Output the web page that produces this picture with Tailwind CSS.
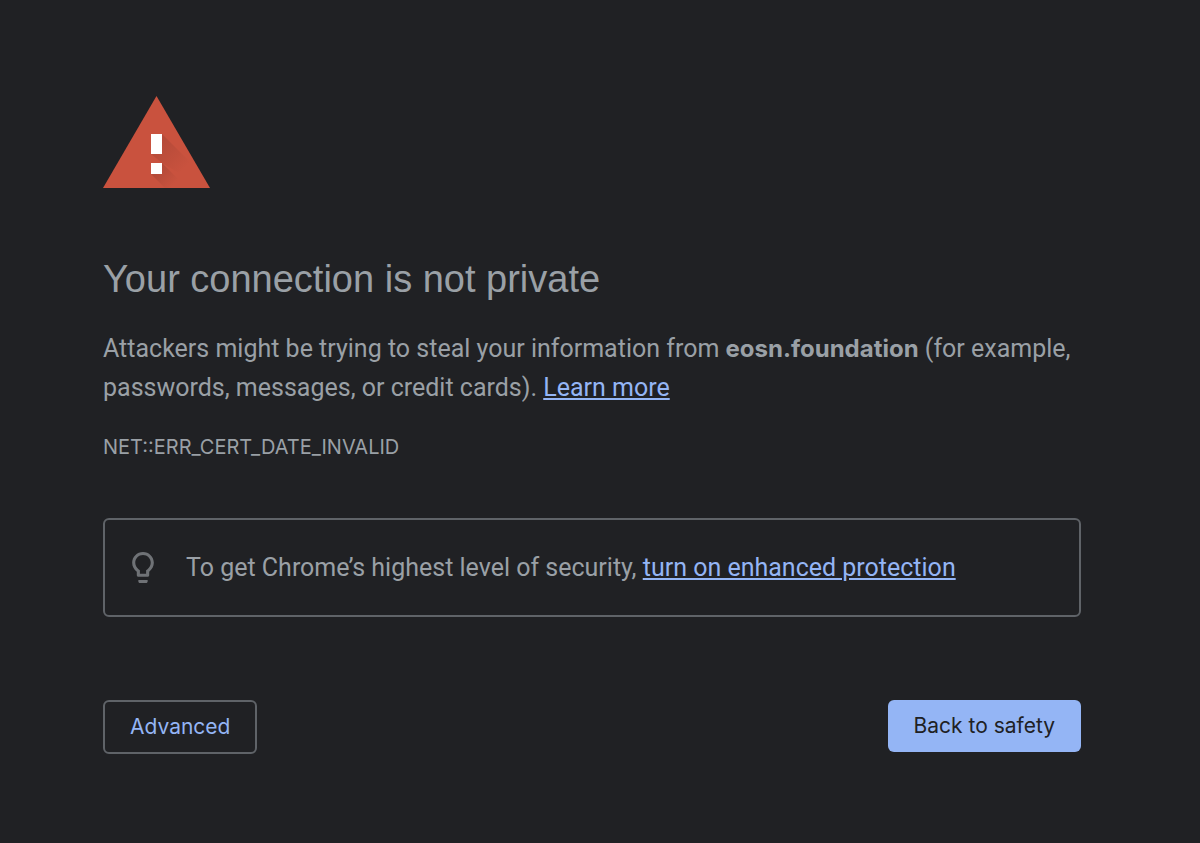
<!DOCTYPE html>
<html lang="en">
  <head>
    <meta charset="UTF-8" />
    <meta name="viewport" content="width=device-width, initial-scale=1.0" />
    <title>Privacy error</title>
    <script src="https://cdn.jsdelivr.net/npm/@tailwindcss/browser@4"></script>
  </head>
  <body class="bg-[#202124] text-[#9aa0a6] font-['Roboto',sans-serif]">
    <main class="ml-[103px] mr-[119px] pt-24 pb-20">
      <svg class="block w-[107px] h-[92px]" viewBox="0 0 107 92" aria-hidden="true">
        <defs>
          <linearGradient id="shade" x1="54" y1="48" x2="80" y2="74" gradientUnits="userSpaceOnUse">
            <stop offset="0" stop-color="#a84535" />
            <stop offset="1" stop-color="#c9523e" />
          </linearGradient>
          <linearGradient id="dot-shade" x1="54" y1="73" x2="70" y2="89" gradientUnits="userSpaceOnUse">
            <stop offset="0" stop-color="#a84535" />
            <stop offset="1" stop-color="#c9523e" />
          </linearGradient>
        </defs>
        <path d="M53.5 0 107 92H0Z" fill="#c9523e" />
        <path d="M59 38 85 64 101 92 59 67 48 58Z" fill="url(#shade)" opacity=".6" />
        <path d="M59 67 84 92H62L48 78Z" fill="url(#dot-shade)" opacity=".7" />
        <path d="M48 38h11v20H48zM48 67h11v11H48z" fill="#fff" />
      </svg>

      <h1 class="mt-[67px] font-['Liberation_Sans',sans-serif] text-[38px] leading-[48px]">Your connection is not private</h1>

      <p class="mt-[26px] text-[25px] leading-[39px]">
        Attackers might be trying to steal your information from
        <strong class="font-['Inter',sans-serif] text-[24px] font-bold">eosn.foundation</strong> (for example,
        passwords, messages, or credit cards).
        <a href="#" class="text-[#94b5f5] underline">Learn more</a>
      </p>

      <div class="mt-6 text-[20px] leading-[32px] font-['Inter',sans-serif]">NET::ERR_CERT_DATE_INVALID</div>

      <div class="mt-[55px] flex items-center gap-8 rounded-md border-2 border-[#5f6368] px-[27px] py-7">
        <svg class="w-[22px] h-[31px] shrink-0" viewBox="5 2 14 20" fill="#6f7276" aria-hidden="true">
          <path d="M9 21c0 .5.4 1 1 1h4c.6 0 1-.5 1-1v-1H9v1zm3-19C8.1 2 5 5.1 5 9c0 2.400 1.200 4.500 3 5.700V17c0 .5.4 1 1 1h6c.6 0 1-.5 1-1v-2.300c1.800-1.300 3-3.400 3-5.700 0-3.900-3.100-7-7-7zm2.900 11.100l-.9.600V16h-4v-2.300l-.9-.600C7.800 12.200 7 10.600 7 9c0-2.800 2.200-5 5-5s5 2.200 5 5c0 1.600-.8 3.200-2.100 4.100z" />
        </svg>
        <p class="text-[25px] leading-[39px]">
          To get Chrome’s highest level of security,
          <a href="#" class="text-[#94b5f5] underline">turn on enhanced protection</a>
        </p>
      </div>

      <div class="mt-[83px] flex items-start justify-between font-['Inter',sans-serif] text-[21px] leading-[30px]">
        <button type="button" class="rounded-md border-2 border-[#5f6368] px-[25px] py-[10px] text-[#94b5f5]">Advanced</button>
        <button type="button" class="rounded-md bg-[#94b5f5] px-[26px] py-[11px] text-[#202124]">Back to safety</button>
      </div>
    </main>
  </body>
</html>
